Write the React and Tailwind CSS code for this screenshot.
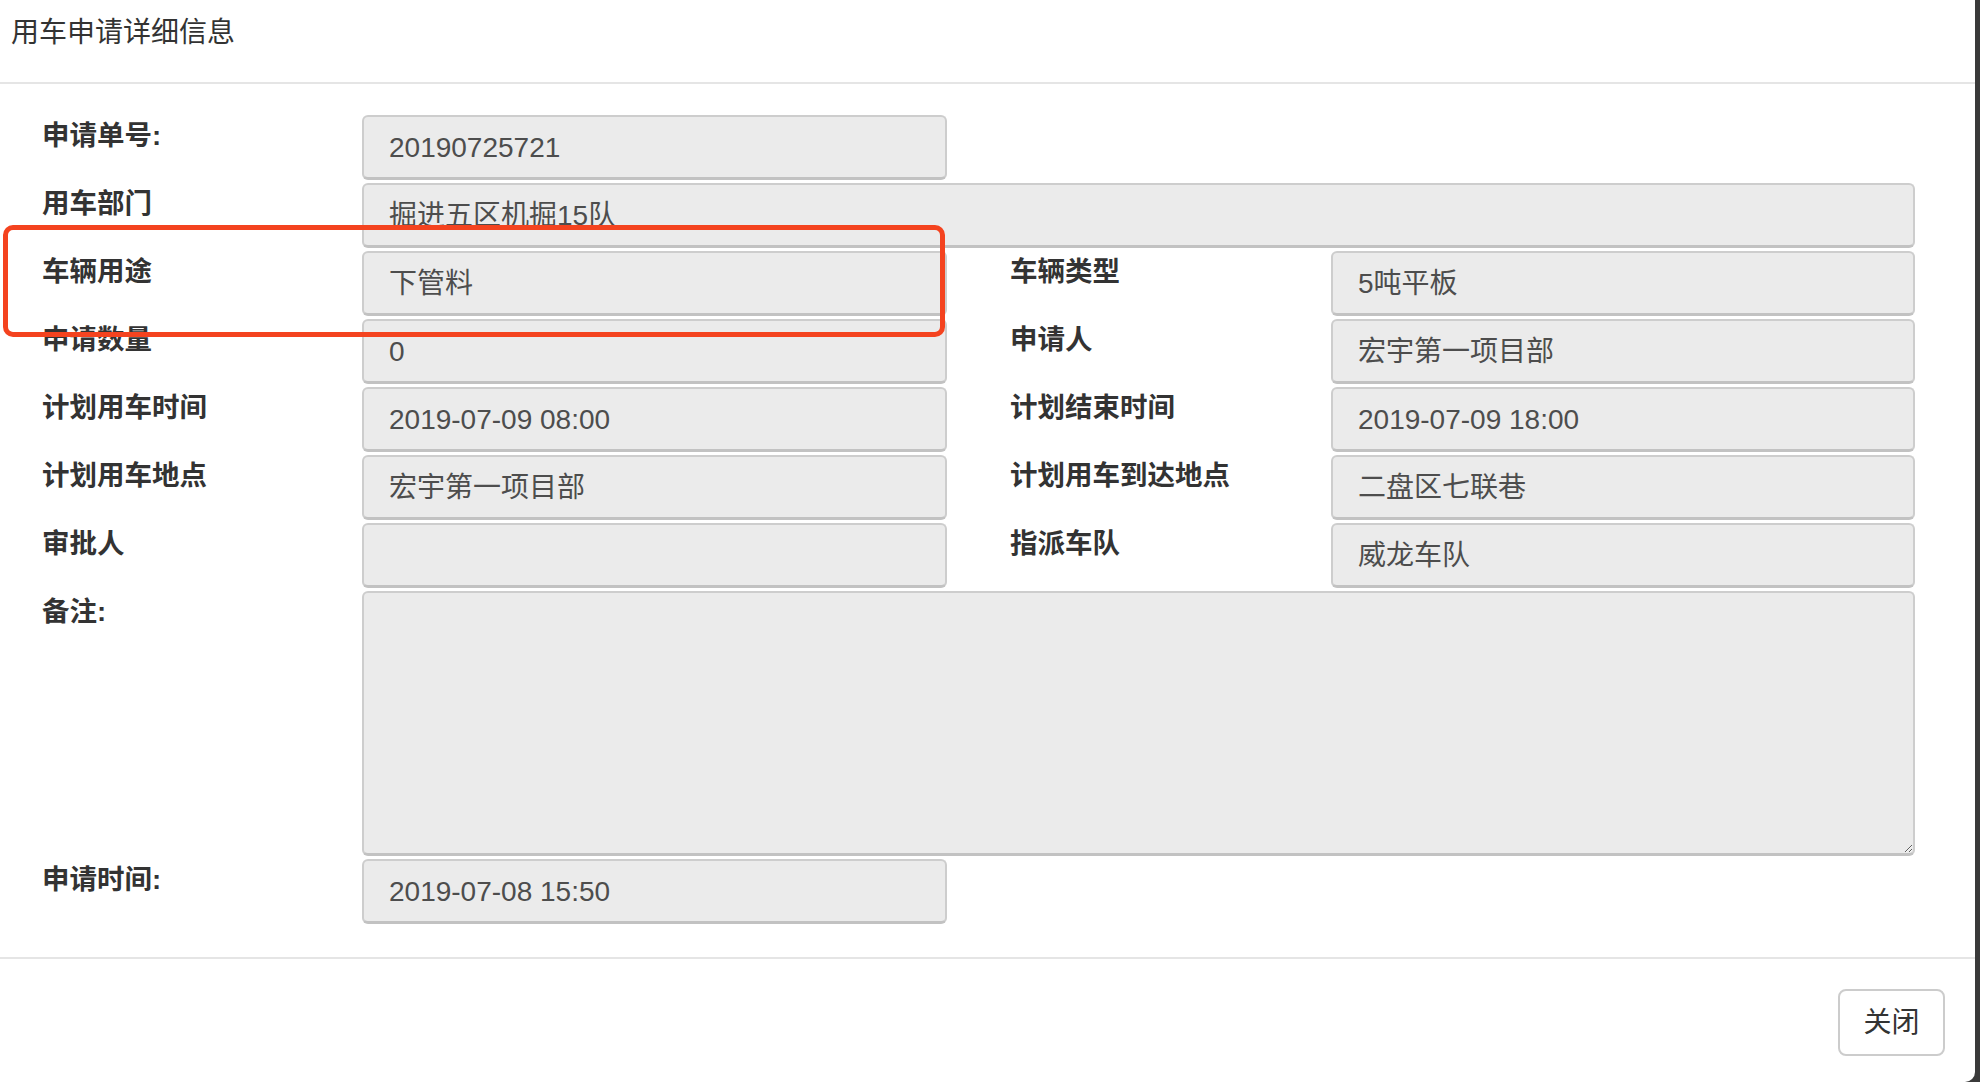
const font = { fontFamily: '"Liberation Sans", "Noto Sans CJK SC", sans-serif' };

function Label({ children, right }) {
  return (
    <div className={`pt-[4px] text-[27.5px] leading-[34px] font-bold text-[#333] ${right ? 'pl-[63px]' : ''}`}>
      {children}
    </div>
  );
}

function Field({ value, span }) {
  return (
    <div
      className={`h-[65px] flex items-center pl-[25px] pt-[2px] bg-[#ebebeb] border-2 border-[#cdcdcd] border-b-[3px] border-b-[#c2c2c2] rounded-[6px] text-[28px] text-[#4d4d4d] ${span ? 'col-span-3' : ''}`}
    >
      {value}
    </div>
  );
}

const rows = [
  ['车辆用途', '下管料', '车辆类型', '5吨平板'],
  ['申请数量', '0', '申请人', '宏宇第一项目部'],
  ['计划用车时间', '2019-07-09 08:00', '计划结束时间', '2019-07-09 18:00'],
  ['计划用车地点', '宏宇第一项目部', '计划用车到达地点', '二盘区七联巷'],
  ['审批人', '', '指派车队', '威龙车队'],
];

export default function App() {
  return (
    <div className="relative h-[1082px] w-[1980px] flex bg-[#3a3a3a] overflow-hidden" style={font}>
      <div className="w-[1975px] h-full bg-white rounded-br-[10px] flex flex-col">
        {/* header */}
        <div className="h-[82px] pt-[13px] pl-[11px] text-[28px] leading-[40px] text-[#333]">用车申请详细信息</div>
        <div className="h-[2px] bg-[#e5e5e5]" />

        {/* body */}
        <div className="pl-[42px] pt-[31px] h-[873px]">
          <div className="grid grid-cols-[320px_585px_384px_584px] gap-y-[3px]">
            <Label>申请单号:</Label>
            <Field value="20190725721" />
            <div />
            <div />

            <Label>用车部门</Label>
            <Field value="掘进五区机掘15队" span />

            {rows.map(([l1, v1, l2, v2]) => (
              <div key={l1} className="contents">
                <Label>{l1}</Label>
                <Field value={v1} />
                <Label right>{l2}</Label>
                <Field value={v2} />
              </div>
            ))}

            <Label>备注:</Label>
            <textarea
              readOnly
              className="col-span-3 h-[265px] bg-[#ebebeb] border-2 border-[#cdcdcd] border-b-[3px] border-b-[#c2c2c2] rounded-[6px] outline-none"
            />

            <Label>申请时间:</Label>
            <Field value="2019-07-08 15:50" />
            <div />
            <div />
          </div>
        </div>

        <div className="h-[2px] bg-[#e5e5e5]" />

        {/* footer */}
        <div className="flex justify-end pt-[30px] pr-[30px]">
          <button className="w-[107px] h-[67px] border-2 border-[#cccccc] rounded-[8px] bg-white text-[28px] text-[#333]">
            关闭
          </button>
        </div>
      </div>

      {/* annotation highlight */}
      <div className="absolute left-[3px] top-[225px] w-[942px] h-[112px] border-[5px] border-[#f4431f] rounded-[10px]" />
    </div>
  );
}
